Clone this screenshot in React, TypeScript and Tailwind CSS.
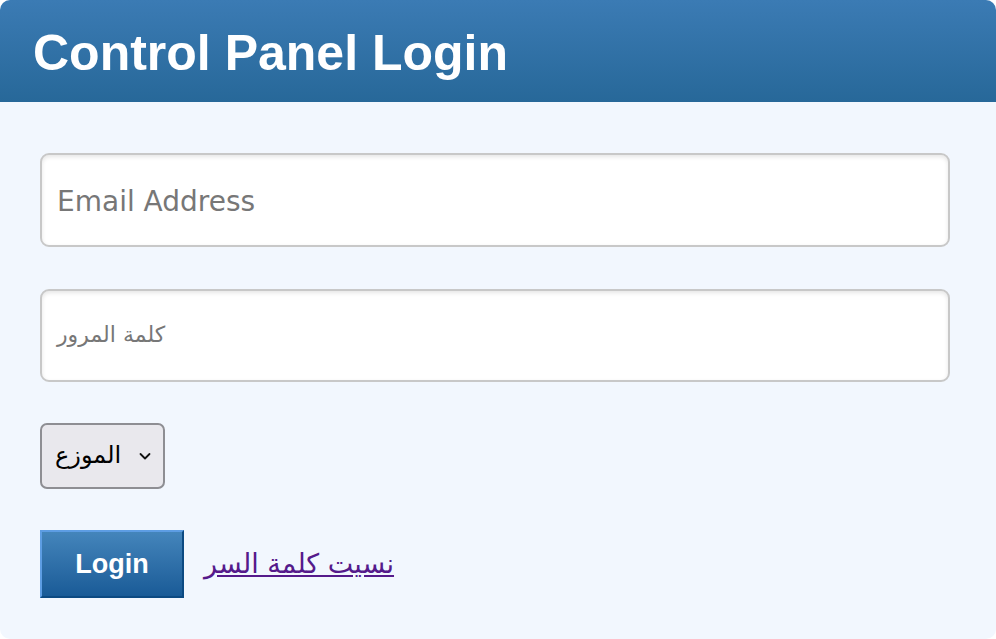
import React from "react";

export default function App() {
  return (
    <div className="w-[996px] h-[639px] bg-white">
      <div className="w-full h-full rounded-[10px] overflow-hidden bg-[#f2f7fe] flex flex-col">
        <div className="h-[102px] shrink-0 bg-gradient-to-b from-[#3b7bb4] to-[#276899] flex items-center pl-[33px]">
          <h1 className="text-white font-bold text-[50px] leading-none font-['Liberation_Sans',Arial,sans-serif] mt-[4px]">
            Control Panel Login
          </h1>
        </div>
        <div className="flex flex-col px-[40px] pt-[51px]">
          <div className="w-[910px] h-[94px] bg-white border-2 border-[#c8c8c8] rounded-[9px] shadow-[inset_0_2px_4px_rgba(0,0,0,0.1)] flex items-center pl-[15px]">
            <span className="text-[#777777] text-[28px] font-['DejaVu_Sans',Verdana,sans-serif] leading-none mt-[4px]">
              Email Address
            </span>
          </div>
          <div className="mt-[42px] w-[910px] h-[93px] bg-white border-2 border-[#c8c8c8] rounded-[9px] shadow-[inset_0_2px_4px_rgba(0,0,0,0.1)] flex items-center pl-[15px]">
            <span dir="rtl" className="text-[#777777] text-[22px] font-['DejaVu_Sans',sans-serif] leading-none -mt-[1px]">
              كلمة المرور
            </span>
          </div>
          <div className="mt-[41px] w-[125px] h-[66px] bg-[#e9e8ed] border-2 border-[#8e8e93] rounded-[7px] flex items-center pl-[13px] pr-[10px] justify-between">
            <span dir="rtl" className="text-black text-[24px] font-['DejaVu_Sans',sans-serif] leading-none -mt-[2px]">
              الموزع
            </span>
            <svg width="14" height="10" viewBox="0 0 14 10" className="mr-[1px]">
              <path d="M2.5 3 L7 7.5 L11.5 3" fill="none" stroke="#111" strokeWidth="1.8" strokeLinecap="round" strokeLinejoin="round" />
            </svg>
          </div>
          <div className="mt-[41px] flex items-center gap-[20px]">
            <div className="w-[144px] h-[68px] bg-gradient-to-b from-[#4485bb] to-[#195b97] border-2 border-t-[#5d9de3] border-l-[#5d9de3] border-r-[#0c4a82] border-b-[#0c4a82] flex items-center justify-center">
              <span className="text-white font-bold text-[27px] font-['Liberation_Sans',Arial,sans-serif] leading-none">
                Login
              </span>
            </div>
            <a href="#" dir="rtl" className="text-[#551a8b] underline text-[27px] font-['DejaVu_Sans',sans-serif] leading-none -mt-[1px]">
              نسيت كلمة السر
            </a>
          </div>
        </div>
      </div>
    </div>
  );
}
